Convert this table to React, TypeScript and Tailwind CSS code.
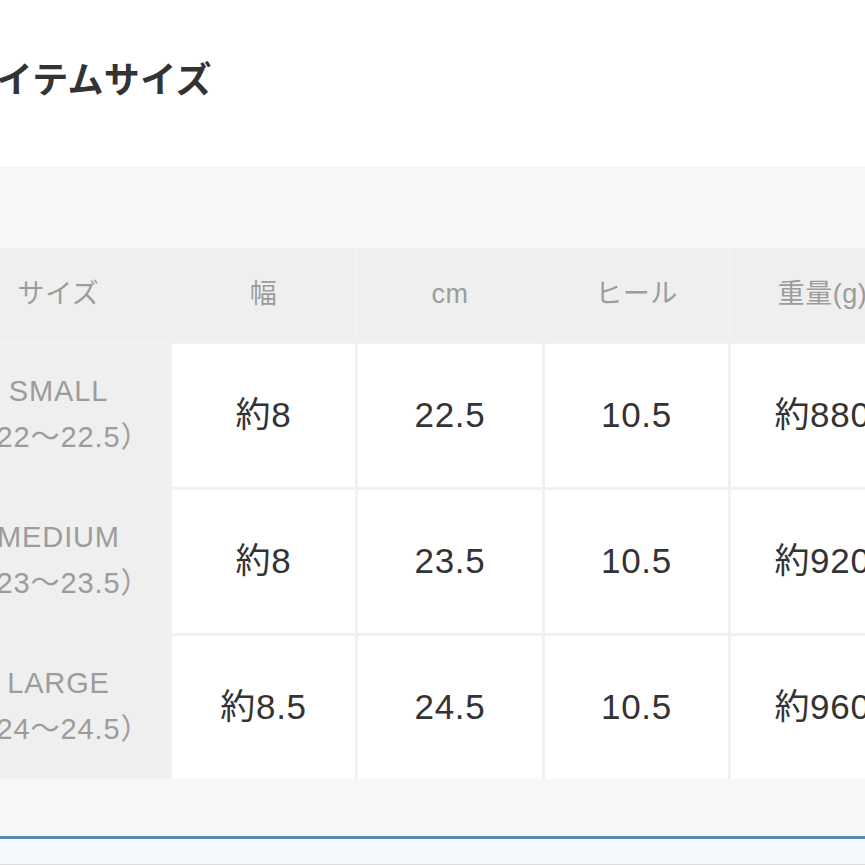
import React from 'react';

const font = { fontFamily: '"Liberation Sans", "Noto Sans CJK JP", sans-serif' };

const headers = ['サイズ', '幅', 'cm', 'ヒール', '重量(g)'];

const rows = [
  { size: 'SMALL', range: '（22〜22.5）', values: ['約8', '22.5', '10.5', '約880'] },
  { size: 'MEDIUM', range: '（23〜23.5）', values: ['約8', '23.5', '10.5', '約920'] },
  { size: 'LARGE', range: '（24〜24.5）', values: ['約8.5', '24.5', '10.5', '約960'] },
];

const App: React.FC = () => {
  return (
    <div className="w-[865px] h-[865px] overflow-hidden bg-white" style={font}>
      <div className="ml-[-52px] w-[1000px]">
        {/* Title */}
        <div className="h-[166px] pt-[57px] pl-[14px]">
          <h2 className="text-[36px] leading-[48px] font-bold text-[#333] tracking-[0.01em]">アイテムサイズ</h2>
        </div>

        {/* Table area */}
        <div className="bg-[#f7f7f7] pt-[82px] pb-[57px]">
          <div className="grid grid-cols-[221px_183px_184px_183px_183px] gap-[3px] bg-[#f1f1f1] w-fit">
            {headers.map((h) => (
              <div
                key={h}
                className="h-[93px] bg-[#efefef] flex items-center justify-center text-[27px] tracking-[0.02em] text-[#9c9c9c]"
              >
                {h}
              </div>
            ))}
            {rows.map((r) => (
              <React.Fragment key={r.size}>
                <div className="h-[143px] bg-[#efefef] flex flex-col items-center justify-center text-[29px] leading-[46px] tracking-[0.03em] text-[#9c9c9c]">
                  <span className="mt-[-4px]">{r.size}</span>
                  <span>{r.range}</span>
                </div>
                {r.values.map((v, i) => (
                  <div
                    key={i}
                    className="h-[143px] bg-white flex items-center justify-center text-[35px] tracking-[0.02em] text-[#333]"
                  >
                    {v}
                  </div>
                ))}
              </React.Fragment>
            ))}
          </div>
        </div>

        {/* Footer strip */}
        <div className="border-t-[3px] border-[#5b88b0] bg-[#f4f8fa] h-[29px] border-b border-b-[#dcdcdc]"></div>
      </div>
    </div>
  );
};

export default App;
